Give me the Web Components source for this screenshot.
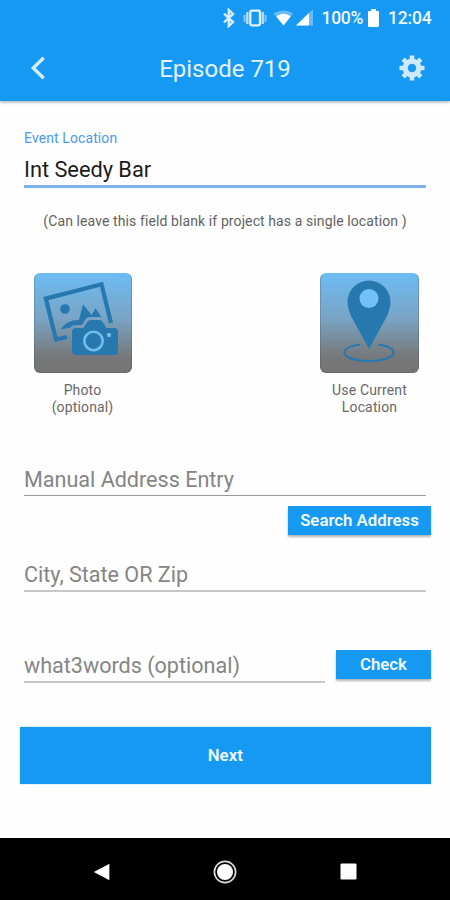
<!DOCTYPE html>
<html lang="en">
<head>
<meta charset="utf-8">
<meta name="viewport" content="width=device-width, initial-scale=1">
<title>Episode 719</title>
<style>
  body {
    margin: 0;
    background: #fefefe;
    font-family: Roboto, "Liberation Sans", sans-serif;
  }
</style>
</head>
<body>
<event-screen></event-screen>

<script>
// Each element renders once from its attributes; nothing here is reactive.
function define(name, render) {
  customElements.define(name, class extends HTMLElement {
    connectedCallback() {
      if (this.shadowRoot) return;
      this.attachShadow({ mode: "open" });
      this.shadowRoot.innerHTML = render(this);
    }
  });
}

define("status-bar", () => `
  <style>
    :host {
      display: flex;
      box-sizing: border-box;
      height: 36px;
      padding-right: 18.5px;
      align-items: center;
      justify-content: flex-end;
      color: #eff8ff;
      font-size: 17.5px;
      font-weight: 500;
      line-height: 36px;
    }
    svg { display: block; fill: currentColor; }
    span { white-space: nowrap; }
    .pct { margin: 0 5px 0 9px; letter-spacing: -0.3px; }
    .time { margin-left: 9px; letter-spacing: -0.2px; }
  </style>
  <svg width="91" height="20" viewBox="0 0 91 20">
    <path d="M2 5.6 11 14 6.8 18V2L11 6 2 14.4" fill="none" stroke="#d9edff" stroke-width="2.4"/>
    <path d="M22.5 7v7M43.5 7v7" stroke="#8ec6ff" stroke-width="2"/>
    <path d="M25.3 4v12M40.7 4v12" stroke="#b5d9ff" stroke-width="2.4"/>
    <rect x="28.3" y="2.7" width="9.6" height="14.6" rx="1.2" fill="none" stroke="#e4f2ff" stroke-width="2.2"/>
    <path d="M51.6 5.4Q61.5-.5 71.2 5.4L61.5 17.4z" opacity=".38"/>
    <path d="M54.2 8.3Q61.5 3.2 68.8 8.3L61.5 17.4z" fill="#fff"/>
    <path d="M74 17.4 91 1.2v16.2z" opacity=".38"/>
    <path d="M74 17.4 87 5v12.4z" fill="#fff"/>
  </svg>
  <span class="pct">100%</span>
  <svg width="11" height="18" viewBox="0 0 11 18">
    <path d="M3 0h5v2h2q1 0 1 1v14q0 1-1 1H1q-1 0-1-1V3q0-1 1-1h2z" fill="#fff"/>
  </svg>
  <span class="time">12:04</span>
`);

define("app-bar", () => `
  <style>
    :host {
      display: grid;
      grid-template-columns: 60px 1fr 60px;
      height: 64.5px;
      align-items: center;
      color: #e4f3ff;
    }
    h1 {
      margin: 0;
      padding-top: 1px;
      text-align: center;
      font-size: 24px;
      font-weight: 400;
      line-height: 30px;
    }
    svg { display: block; }
    .back { margin: 0 0 1px 30px; }
    .gear { margin: -1px 0 0 9px; }
  </style>
  <svg class="back" width="16" height="26" viewBox="0 0 16 26">
    <path d="M13.7 2.8 3.3 13l10.4 10.2" fill="none" stroke="#d5ecff" stroke-width="3.4"/>
  </svg>
  <h1><slot></slot></h1>
  <svg class="gear" width="26" height="26" viewBox="-13 -13 26 26">
    <g fill="none" stroke="#cfe9ff">
      <circle r="6.8" stroke-width="5.2"/>
      <path d="M0-8v-4.5M0 8v4.5M-8 0h-4.5M8 0h4.5M-5.8-5.8l-3.1-3.1M5.8-5.8l3.1-3.1M-5.8 5.8l-3.1 3.1M5.8 5.8l3.1 3.1" stroke-width="4.6"/>
    </g>
  </svg>
`);

// Underlined text field. A "label" attribute means the field is filled in
// and the label floats above it, otherwise the slot is the placeholder.
define("text-field", (el) => `
  <style>
    :host { display: block; color: var(--field-ink, #858585); }
    label {
      display: block;
      height: 20px;
      margin-bottom: 6.5px;
      color: #4a9aeb;
      font-size: 14px;
      line-height: 20px;
      letter-spacing: 0.1px;
    }
    .value {
      height: 31px;
      border-bottom: var(--field-line, 2.5px solid #c8c8c8);
      font-size: var(--field-size, 21.6px);
      line-height: 31px;
      letter-spacing: -0.02px;
      white-space: nowrap;
    }
  </style>
  ${el.hasAttribute("label") ? `<label>${el.getAttribute("label")}</label>` : ""}
  <div class="value"><slot></slot></div>
`);

define("raised-button", () => `
  <style>
    :host {
      display: flex;
      height: 29.5px;
      align-items: center;
      justify-content: center;
      background: #1599f3;
      box-shadow: 0 1.5px 2px rgba(60, 70, 90, 0.4);
      color: #eff8ff;
      font-size: 16.8px;
      font-weight: 600;
      white-space: nowrap;
    }
  </style>
  <slot></slot>
`);

const TILE_ICONS = {
  photo: `
    <mask id="gap">
      <path d="M0 0h97v97H0z" fill="#fff"/>
      <path d="M41 54h7.500l4-6.300q1-1.700 3-1.700h9q2 0 3 1.700l4 6.300H79q4 0 4 4v19q0 4-4 4H41q-4 0-4-4V58q0-4 4-4z" stroke="#000" stroke-width="6"/>
    </mask>
    <g mask="url(#gap)">
      <path d="M32 63 21 65.500 10.800 24.600 66.500 10.200 76 49" fill="none" stroke="#2878b0" stroke-width="4.200"/>
      <circle cx="30" cy="35" r="4.800"/>
      <path d="M25.500 55.500Q31 46 44 46L48 30.300 56.500 41 60.500 34.200 67 44 68 48H54L46 56 34 54z"/>
    </g>
    <path d="M41 54h7.500l4-6.300q1-1.700 3-1.700h9q2 0 3 1.700l4 6.300H79q4 0 4 4v19q0 4-4 4H41q-4 0-4-4V58q0-4 4-4z"/>
    <circle cx="58.500" cy="67" r="9.200" fill="none" stroke="#72bdec" stroke-width="2.600"/>
    <circle cx="74" cy="61" r="2.200" fill="#72bdec"/>`,
  pin: `
    <path d="M39 70.500C29 72 23.500 75 23.500 78.500c0 5 10.500 8.500 24.500 8.500s24.500-3.500 24.500-8.500c0-3.700-6-6.700-15.500-8" fill="none" stroke="#2878b0" stroke-width="2.200"/>
    <path d="M48 75 29.500 41Q26.500 34 26.500 28a21.500 21.500 0 0 1 43 0q0 6-3 13z"/>
    <circle cx="48" cy="24.500" r="9.500" fill="#73c0f8"/>`,
};

define("icon-tile", (el) => `
  <style>
    :host { display: block; width: 99px; }
    .tile {
      box-sizing: border-box;
      width: var(--tile-width, 99px);
      height: 99.5px;
      border: 1px solid rgba(70, 85, 100, 0.3);
      border-top-color: transparent;
      border-radius: 6px;
      background: linear-gradient(#6cbcf4, #79a4c5 45%, #777879 84%, #747474) border-box;
    }
    svg { display: block; fill: #2878b0; }
    .caption {
      width: var(--tile-width, 99px);
      margin-top: 9px;
      color: #686868;
      font-size: 14px;
      line-height: 17px;
      letter-spacing: 0.15px;
      text-align: center;
    }
  </style>
  <div class="tile"><svg width="97" height="97" viewBox="0 0 97 97">${TILE_ICONS[el.getAttribute("icon")]}</svg></div>
  <div class="caption"><slot></slot></div>
`);

define("nav-bar", () => `
  <style>
    :host {
      display: flex;
      box-sizing: border-box;
      height: 62px;
      padding: 5px 93px 0;
      align-items: center;
      justify-content: space-between;
      background: #000;
    }
    svg { display: block; fill: #fff; }
  </style>
  <svg width="17" height="18" viewBox="0 0 17 18"><path d="M.8 9 16.4.8v16.4z"/></svg>
  <svg width="24" height="24" viewBox="-12 -12 24 24">
    <circle r="8"/>
    <circle r="10.6" fill="none" stroke="#ddd" stroke-width="1.7"/>
  </svg>
  <svg width="17" height="17" viewBox="0 0 17 17"><rect x=".5" y=".5" width="16" height="16" rx="1"/></svg>
`);

define("event-screen", () => `
  <style>
    :host {
      display: flex;
      flex-direction: column;
      width: 450px;
      height: 900px;
      overflow: hidden;
    }
    header {
      background: #1599f3;
      box-shadow: 0 1px 3px rgba(60, 80, 110, 0.5);
    }
    main { flex: 1; padding: 27px 19px 0 24px; }
    .event {
      margin-right: 5px;
      --field-ink: #1c1c1c;
      --field-line: 3px solid #7fb0ee;
      --field-size: 21.8px;
    }
    .hint {
      margin: 23px 5px 0 0;
      color: #626262;
      font-size: 14px;
      line-height: 20px;
      letter-spacing: 0.1px;
      text-align: center;
      white-space: nowrap;
    }
    .tiles {
      display: flex;
      justify-content: space-between;
      margin: 42px 12px 0 9.5px;
    }
    .photo { --tile-width: 98px; }
    .manual {
      margin: 48px 5px 0 0;
      --field-line: 1.5px solid #999;
    }
    .search { width: 143px; margin: 10px 0 0 auto; }
    .city { margin: 24px 5px 0 0; }
    .words {
      display: flex;
      margin-top: 57.5px;
      align-items: flex-start;
      justify-content: space-between;
    }
    .words text-field { width: 301px; }
    .words raised-button { width: 95px; }
    .next {
      height: 57px;
      margin: 44px 0 0 -4.5px;
      box-shadow: 0 0 1px rgba(21, 153, 243, 0.6);
    }
  </style>
  <header>
    <status-bar></status-bar>
    <app-bar>Episode 719</app-bar>
  </header>
  <main>
    <text-field class="event" label="Event Location">Int Seedy Bar</text-field>
    <div class="hint">(Can leave this field blank if project has a single location )</div>
    <div class="tiles">
      <icon-tile class="photo" icon="photo">Photo<br>(optional)</icon-tile>
      <icon-tile icon="pin">Use Current<br>Location</icon-tile>
    </div>
    <text-field class="manual">Manual Address Entry</text-field>
    <raised-button class="search">Search Address</raised-button>
    <text-field class="city">City, State OR Zip</text-field>
    <div class="words">
      <text-field>what3words (optional)</text-field>
      <raised-button>Check</raised-button>
    </div>
    <raised-button class="next">Next</raised-button>
  </main>
  <nav-bar></nav-bar>
`);
</script>
</body>
</html>
